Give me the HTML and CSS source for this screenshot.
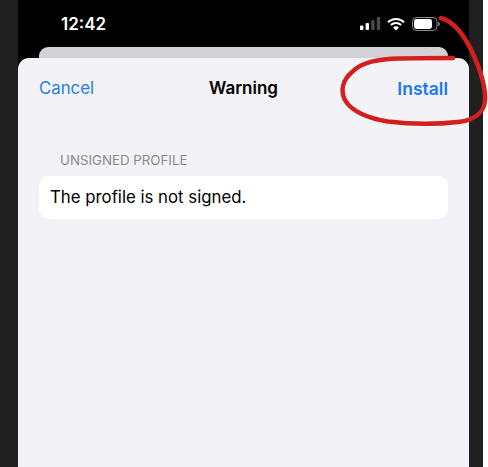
FILE: index.html
```html
<!DOCTYPE html>
<html lang="en">
<head>
<meta charset="utf-8">
<title>Warning</title>
<link rel="stylesheet" href="styles.css">
</head>
<body>
<div class="frame">
  <div class="phone">
    <div class="status">
      <span class="time">12:42</span>
      <div class="status-icons">
        <svg class="signal" width="21" height="13" viewBox="0 0 21 13"><rect x="0" y="8.500" width="3.400" height="4.500" rx="1" fill="#fff"/><rect x="5.600" y="6" width="3.400" height="7" rx="1" fill="#fff"/><rect x="11.200" y="3" width="3.400" height="10" rx="1" fill="#4a4a4a"/><rect x="16.800" y="0" width="3.400" height="13" rx="1" fill="#4a4a4a"/></svg>
        <svg class="wifi" width="18" height="14" viewBox="0 0 18 14"><path d="M1 5.200a11.400 11.400 0 0 1 16 0M3.900 8a7.300 7.300 0 0 1 10.200 0" fill="none" stroke="#fff" stroke-width="2"/><path d="M9 13.500l-2.900-3a4 4 0 0 1 5.800 0z" fill="#fff"/></svg>
        <svg class="battery" width="28" height="14" viewBox="0 0 28 14"><rect x=".5" y=".5" width="24.500" height="13" rx="3.800" fill="none" stroke="#8e8e8e"/><rect x="2" y="2" width="18" height="10" rx="2.400" fill="#fff"/><path d="M26.200 4.800c1 .3 1.600 1.100 1.600 2.200s-.6 1.900-1.600 2.200z" fill="#8e8e8e"/></svg>
      </div>
    </div>
    <div class="back-card"></div>
    <div class="sheet">
      <div class="nav">
        <span class="action">Cancel</span>
        <span class="title">Warning</span>
        <span class="action install">Install</span>
      </div>
      <div class="section-label">UNSIGNED PROFILE</div>
      <div class="row">The profile is not signed.</div>
    </div>
  </div>
</div>
<svg class="scribble" width="488" height="467" viewBox="0 0 488 467"><path d="M441 18C456 22 466 38 474 56C481 72 485.500 88 485 100C484.500 112 475 120 458 122C436 124.500 408 124 388 121.500C368 118.500 351 111 345 100C340 90 343 80 352 72C362 62 378 59 400 58.500C420 58 438 58 453 58" fill="none" stroke="#d3201f" stroke-width="4.500" stroke-linecap="round" stroke-linejoin="round"/></svg>
</body>
</html>
```
FILE: styles.css
```css
html, body {
  margin: 0;
  padding: 0;
  background: #fff;
}
body {
  position: relative;
  width: 488px;
  height: 467px;
  overflow: hidden;
  font-family: Inter, "Liberation Sans", sans-serif;
}
.frame {
  width: 483px;
  height: 467px;
  background: #202020;
  padding-left: 18px;
  box-sizing: border-box;
}
.phone {
  width: 451px;
  height: 467px;
  background: #000;
  display: flex;
  flex-direction: column;
}
.status {
  height: 47px;
  flex: none;
  display: flex;
  align-items: center;
  justify-content: space-between;
  padding: 0 29px 0 43px;
  box-sizing: border-box;
}
.time {
  color: #fff;
  font-size: 17px;
  font-weight: 600;
}
.status-icons {
  display: flex;
  align-items: center;
  gap: 7px;
}
.wifi {
  margin-left: -1px;
}
.back-card {
  height: 11px;
  flex: none;
  margin: 0 21px;
  background: #d1d1d6;
  border-radius: 9px 9px 0 0;
}
.sheet {
  flex: 1;
  background: #f2f2f7;
  border-radius: 11px 11px 0 0;
  padding: 0 21px;
}
.nav {
  height: 60px;
  display: flex;
  align-items: center;
  justify-content: space-between;
}
.action {
  color: #2680e6;
  font-size: 16.800px;
  width: 70px;
}
.install {
  color: #1a7ae8;
  font-size: 17.500px;
  font-weight: 600;
  text-align: right;
}
.title {
  color: #000;
  font-size: 17px;
  font-weight: 600;
}
.section-label {
  margin-top: 33px;
  padding-left: 21px;
  color: #8a8a8e;
  font-size: 13.300px;
  line-height: 18px;
}
.row {
  margin-top: 7px;
  height: 43px;
  background: #fff;
  border-radius: 10px;
  padding: 0 11px 2px;
  box-sizing: border-box;
  display: flex;
  align-items: center;
  color: #000;
  font-size: 16.800px;
}
.scribble {
  position: absolute;
  left: 0;
  top: 0;
  pointer-events: none;
}
```
